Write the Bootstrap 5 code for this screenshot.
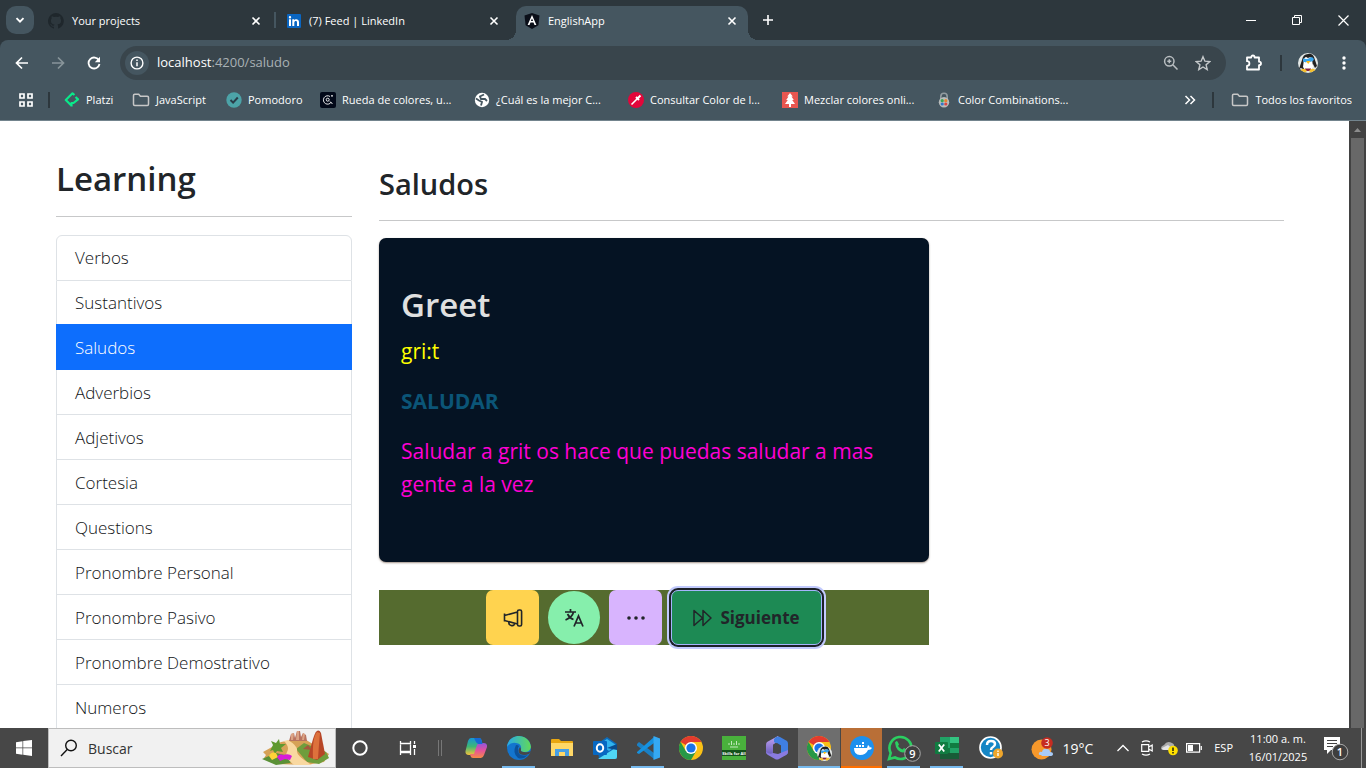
<!DOCTYPE html>
<html lang="es">
<head>
<meta charset="utf-8">
<meta name="viewport" content="width=device-width, initial-scale=1">
<title>EnglishApp</title>
<link href="https://cdn.jsdelivr.net/npm/bootstrap@5.3.0/dist/css/bootstrap.min.css" rel="stylesheet">
<style>
body{font-family:"Open Sans","Noto Sans",sans-serif;font-size:17px;overflow:hidden}
svg{display:block;flex:none}
button{font-family:inherit}
.plain{background:none;border:0;padding:0;color:inherit;display:flex;align-items:center;justify-content:center;flex:none}
/* browser frame */
.tabstrip{height:40px;background:#2d373d;color:#fff;font-size:11px;padding-left:6px}
.tabmenu{width:28px;height:28px;border-radius:10px;background:#455660}
.tab{height:34px;padding-bottom:6px;padding-top:2px}
.tab .plain{width:16px;height:16px}
.tab-one{width:240px;padding-left:14px;padding-right:10px}
.tab-two{width:240px;padding-left:11px;padding-right:14px}
.tab-on{width:232px;padding-left:8px;padding-right:8px;background:#455660;border-radius:10px 10px 0 0;position:relative}
.tab-on::before,.tab-on::after{content:"";position:absolute;bottom:0;width:10px;height:10px}
.tab-on::before{left:-10px;background:radial-gradient(circle at 0 0,transparent 10px,#455660 10px)}
.tab-on::after{right:-10px;background:radial-gradient(circle at 100% 0,transparent 10px,#455660 10px)}
.vline{width:2px;height:16px;background:#455660;flex:none}
.newtab{width:24px}
.winbtn{width:46px;height:40px}
.frame{background:#455660;color:#fff;border-bottom:1px solid #73848d}
.round-top{background:#2d373d}
.toolbar{height:46px;background:#455660;border-radius:8px 8px 0 0;padding:0 12px 0 4px}
.nav-i{width:36px;height:36px}
.omni{height:34px;border-radius:17px;background:#39454c;padding:0 7px 0 5px}
.omni-info{width:24px;height:24px;border-radius:50%;background:#455660}
.omni-btn{width:32px}
.ext{width:54px}
.profile{width:52px}
.dots{width:20px}
.url{font-size:13px;color:#a9b1b5}
.url b{color:#fff;font-weight:400}
.sep-d{width:2px;height:16px;background:#2d373d;flex:none}
.marks .sep-d{margin:0 14px}
.marks .sep-end{margin:0 17px 0 16px}
.marks{height:34px;font-size:11px;padding:0 14px 6px 18px}
.marks a{color:#fff;text-decoration:none;display:flex;align-items:center;gap:6px;white-space:nowrap;overflow:hidden;flex:none}
.bm-s{width:68px}
.bm-m{width:94px}
.bm-l{width:154px}
/* page */
.viewport{min-height:0;overflow:hidden;background:#fff}
.shell{display:grid;grid-template-columns:296px minmax(0,1fr);column-gap:27px;padding:36px 65px 0 56px;overflow:hidden}
.shell h1{font-size:33px;line-height:44px;margin:0 0 15px;font-weight:600}
.shell h2{font-size:29px;line-height:40px;margin:0 0 16px;padding-top:7px;font-weight:600}
.shell hr{margin:0 0 18px}
.shell main hr{margin-bottom:17px}
.menu .list-group-item{padding:9px 18px 8px;height:45px;line-height:26px;font-weight:300;white-space:nowrap;color:#111417}
.menu .list-group-item:first-child{height:46px}
.menu .list-group-item:last-child{border-radius:0}
.menu .list-group-item + .list-group-item.active{color:#fff;background:#0d6efd;margin-top:-2px;height:46px}
.menu .active,.menu .active ~ .list-group-item{padding-top:10px}
.panel{max-width:550px}
.word{background:#051323;border:0;border-radius:7px;height:324px;padding:42px 22px 0;box-shadow:0 1px 2px rgba(70,40,20,.5);font-size:21px;line-height:33px}
.word h3{font-size:33px;line-height:50px;font-weight:600;color:#e0e0e0;margin:0 0 5px}
.word p{margin:0 0 17px}
.ipa{color:#ff0}
.trad{color:#0b5577;font-weight:700}
.desc{color:#ff00d4}
.actions{background:#556b2f;height:55px;margin-top:28px;gap:9px;justify-content:center}
.act{width:53px;height:55px;border-radius:7px;color:#212529}
.act-y{background:#ffd34f}
.act-g{background:#86efac;border-radius:50%;width:52px;height:53px}
.act-p{background:#d8b4fe}
.next{height:55px;width:151px;border:1px solid #a5b4fc;border-radius:7px;background:#1d8a54;color:#212529;font-weight:700;font-size:17px;gap:8px;display:flex;align-items:center;justify-content:center;padding:0;box-shadow:0 0 0 2px #1c2127,0 0 0 4px #c2cafd}
.sbar{width:17px;background:#424242;flex:none}
.sbar .thumb{margin:0 2px;background:#686868}
/* taskbar */
.taskbar{height:40px;background:#474747;color:#fff;font-size:11px}
.t-start{width:48px}
.t-search{width:288px;background:#f1f1f1;border:1px solid #bdbdbd;padding:0 5px 0 11px;gap:10px}
.t-search input{background:none;border:0;outline:0;padding:0;width:100px;flex:1 1 100px;color:#333;font-size:14px}
.t-search input::placeholder{color:#333;opacity:1}
.t-app{width:43px;height:40px;position:relative}
.t-wide{width:48px}
.t-grip{width:22px;padding-left:6px}
.t-run::after{content:"";position:absolute;left:5px;right:5px;bottom:0;height:2px;background:#76b9ed}
.t-on{background:#6e6e6e;width:42px}
.t-on::after{left:0;right:0}
.t-hot{background:#b96f37;width:42px;border-left:1px solid #474747}
.t-hot::after{left:0;right:0;background:#ff6f00}
.weather{font-size:14px;gap:8px;margin-right:12px}
.tray{gap:12px;padding-right:1px}
.tray-ico{gap:8px}
.clock{line-height:18px;width:66px}
.peek{width:4px;height:40px;border-left:1px solid #999}
</style>
</head>
<body class="vh-100 d-flex flex-column">
<svg width="0" height="0" class="position-absolute" aria-hidden="true">
<defs>
<symbol id="x" viewBox="0 0 16 16"><path d="M4.500 4.500l7 7m0-7l-7 7" stroke="#fff" stroke-width="1.600"/></symbol>
<symbol id="folder" viewBox="0 0 18 16"><path d="M1.500 3.500q0-1.200 1.200-1.200h4l1.700 2h6.900q1.200 0 1.200 1.200v6.700q0 1.200-1.200 1.200H2.700q-1.200 0-1.200-1.200z" fill="none" stroke="#c7c7c7" stroke-width="1.500"/></symbol>
<symbol id="chrome" viewBox="0 0 24 24"><circle cx="12" cy="12" r="12" fill="#fbc116"/><path d="M12 12L1.600 6A12 12 0 0 1 22.400 6H12z" fill="#e33b2e"/><path d="M1.600 6A12 12 0 0 0 12 24l5.200-9L12 12 6.800 15z" fill="#279847"/><circle cx="12" cy="12" r="6" fill="#fff"/><circle cx="12" cy="12" r="4.600" fill="#1a73e8"/></symbol>
<symbol id="penguin" viewBox="0 0 20 20"><circle cx="10" cy="10" r="10" fill="#e4e8e6"/><path d="M4 7q1-6 6-6 4-1 6 3l3 9-2 2-2-4-8 6-4-2-2 1z" fill="#222"/><path d="M6 6q1-3 4-1 3-2 4 1l1 8-2 3H7l-2-3z" fill="#fff"/><path d="M5 5.500l4 .5 5-2 2 2-1 2-3 1-2-1-2 1.500-3-1z" fill="#3aa5ec"/><circle cx="8" cy="5" r=".8" fill="#fff"/><path d="M8 8h4.500l-2.300 3z" fill="#f8bb19"/><path d="M7 15.500h6V18H7z" fill="#8b2342"/><path d="M2.500 17q4-3 6.500 1l-2 1.600zM17.500 17q-4-3-6.500 1l2 1.600z" fill="#f6c12e"/></symbol>
</defs></svg>

<header>
<div class="tabstrip d-flex align-items-center">
 <button class="plain tabmenu" aria-label="Buscar pestañas"><svg width="14" height="14" viewBox="0 0 14 14"><path d="M3.500 5.200L7 8.700l3.500-3.500" fill="none" stroke="#fff" stroke-width="1.900"/></svg></button>
 <div class="tab tab-one d-flex align-items-center mt-auto gap-2">
  <svg width="16" height="16" viewBox="0 0 16 16"><path fill="#1f272c" d="M8 0a8 8 0 0 0-2.500 15.600c.4.100.5-.2.500-.4v-1.500c-2.200.5-2.700-.9-2.700-.9-.4-1-.9-1.200-.9-1.200-.7-.5.100-.5.100-.5.800.100 1.200.8 1.200.8.700 1.300 1.900.9 2.300.7.100-.5.300-.9.500-1.100-1.800-.2-3.600-.9-3.600-4 0-.9.300-1.600.8-2.100-.1-.2-.4-1 .1-2.100 0 0 .7-.2 2.200.8a7.600 7.600 0 0 1 4 0c1.500-1 2.200-.8 2.200-.8.400 1.100.1 1.900.1 2.100.5.600.8 1.300.8 2.100 0 3.100-1.900 3.700-3.700 3.900.3.300.6.800.6 1.500v2.200c0 .2.100.5.600.4A8 8 0 0 0 8 0z"/></svg>
  <span class="flex-grow-1">Your projects</span><button class="plain" aria-label="Cerrar"><svg width="16" height="16"><use href="#x"/></svg></button>
 </div>
 <span class="vline"></span>
 <div class="tab tab-two d-flex align-items-center mt-auto gap-2">
  <svg width="14" height="14" viewBox="0 0 14 14"><rect width="14" height="14" rx="1" fill="#0a66c2"/><path fill="#fff" d="M2 5.300h2V12H2zM3 2a1.200 1.200 0 1 1 0 2.400A1.200 1.200 0 0 1 3 2zm2.300 3.300h1.900v.9c.8-1.500 4.800-1.700 4.800 1.900V12h-2V8.500c0-2.200-2.700-1.900-2.700 0V12h-2z"/></svg>
  <span class="flex-grow-1">(7) Feed | LinkedIn</span><button class="plain" aria-label="Cerrar"><svg width="16" height="16"><use href="#x"/></svg></button>
 </div>
 <div class="tab tab-on d-flex align-items-center mt-auto gap-2">
  <svg width="16" height="16" viewBox="0 0 16 16"><path d="M8 0l7.500 2.600-1.100 9.700L8 16l-6.400-3.700L.5 2.600z" fill="#0b0f19"/><path d="M8 2L3.600 12h1.900l1-2.400h3l1 2.400h1.900zm0 3.500L9.100 8H6.900z" fill="#fff"/></svg>
  <span class="flex-grow-1">EnglishApp</span><button class="plain" aria-label="Cerrar"><svg width="16" height="16"><use href="#x"/></svg></button>
 </div>
 <button class="plain newtab ms-2" aria-label="Nueva pestaña"><svg width="12" height="12" viewBox="0 0 12 12"><path d="M6 1v10M1 6h10" stroke="#fff" stroke-width="1.600"/></svg></button>
 <div class="ms-auto d-flex">
  <button class="plain winbtn" aria-label="Minimizar"><svg width="10" height="10" viewBox="0 0 10 10"><path d="M0 5.500h10" stroke="#fff"/></svg></button>
  <button class="plain winbtn" aria-label="Restaurar"><svg width="10" height="10" viewBox="0 0 10 10"><path d="M.5 2.500h7v7h-7zM2.500 2.500v-2h7v7h-2" fill="none" stroke="#fff"/></svg></button>
  <button class="plain winbtn" aria-label="Cerrar ventana"><svg width="11" height="11" viewBox="0 0 11 11"><path d="M.5.500l10 10m0-10l-10 10" stroke="#fff" stroke-width="1.200"/></svg></button>
 </div>
</div>
<div class="frame">
 <div class="round-top"><div class="toolbar d-flex align-items-center">
  <button class="plain nav-i" aria-label="Atrás"><svg width="14" height="14" viewBox="0 0 14 14"><path d="M7 1.500L1.500 7 7 12.500M1.500 7H13" fill="none" stroke="#fff" stroke-width="1.700"/></svg></button>
  <button class="plain nav-i" aria-label="Adelante"><svg width="14" height="14" viewBox="0 0 14 14"><path d="M7 1.500L12.500 7 7 12.500M12.500 7H1" fill="none" stroke="#88949a" stroke-width="1.700"/></svg></button>
  <button class="plain nav-i" aria-label="Recargar"><svg width="14" height="14" viewBox="0 0 14 14"><path d="M12 4.500A5.500 5.500 0 1 0 12.500 8" fill="none" stroke="#fff" stroke-width="1.800"/><path d="M13 .8v5.400H7.800z" fill="#fff"/></svg></button>
  <div class="omni flex-grow-1 d-flex align-items-center ms-2">
   <button class="plain omni-info" aria-label="Información del sitio"><svg width="14" height="14" viewBox="0 0 14 14"><circle cx="7" cy="7" r="5.900" fill="none" stroke="#fff" stroke-width="1.400"/><path d="M7 6.200v4M7 3.500v1.500" stroke="#fff" stroke-width="1.500"/></svg></button>
   <span class="url flex-grow-1 ms-2"><b>localhost</b>:4200/saludo</span>
   <button class="plain omni-btn" aria-label="Zoom"><svg width="16" height="16" viewBox="0 0 16 16"><circle cx="6.300" cy="6.300" r="4.700" fill="none" stroke="#b9bec1" stroke-width="1.500"/><path d="M9.800 9.800l4.700 4.700M6.300 4.300v4M4.300 6.300h4" stroke="#b9bec1" stroke-width="1.500"/></svg></button>
   <button class="plain omni-btn" aria-label="Favorito"><svg width="16" height="16" viewBox="0 0 16 16"><path d="M8 1.700l1.900 4.500 4.900.4-3.700 3.200 1.100 4.800L8 12l-4.200 2.600 1.100-4.800L1.200 6.600l4.900-.4z" fill="none" stroke="#c5c9cb" stroke-width="1.400"/></svg></button>
  </div>
  <button class="plain ext" aria-label="Extensiones"><svg width="18" height="18" viewBox="0 0 18 18"><path d="M3 3.500h4.200q0-2 1.700-2t1.700 2H15v4.200q2 0 2 1.700t-2 1.700v4.400H3v-3.700q2.400 0 2.400-2.300T3 7.200z" fill="none" stroke="#fff" stroke-width="1.800" stroke-linejoin="round"/></svg></button>
  <span class="sep-d"></span>
  <button class="plain profile" aria-label="Perfil"><svg width="20" height="20"><use href="#penguin"/></svg></button>
  <button class="plain dots" aria-label="Menú"><svg width="4" height="16" viewBox="0 0 4 16"><g fill="#fff"><circle cx="2" cy="3" r="1.700"/><circle cx="2" cy="8" r="1.700"/><circle cx="2" cy="13" r="1.700"/></g></svg></button>
 </div></div>
 <nav class="marks d-flex align-items-center">
  <button class="plain" aria-label="Aplicaciones"><svg width="16" height="16" viewBox="0 0 16 16"><g fill="none" stroke="#fff" stroke-width="1.700"><path d="M2 2h4v4H2zM10 2h4v4h-4zM2 10h4v4H2zM10 10h4v4h-4z"/></g></svg></button>
  <span class="sep-d"></span>
  <a href="#" class="bm-s"><svg width="16" height="16" viewBox="0 0 16 16"><path d="M10.500 3L8.500 1.300 1.800 8l5 5M7.500 14.500v-3.500h2L14 7.300 11.500 5" fill="none" stroke="#0ae98a" stroke-width="2.200" stroke-linejoin="round"/></svg>Platzi</a>
  <a href="#" class="bm-m"><svg width="18" height="16"><use href="#folder"/></svg>JavaScript</a>
  <a href="#" class="bm-m"><svg width="16" height="16" viewBox="0 0 16 16"><circle cx="8" cy="8" r="7.700" fill="#4ca3a8"/><path d="M4.500 8l2.600 2.600L11.800 5.500" fill="none" stroke="#2a3c48" stroke-width="2"/></svg>Pomodoro</a>
  <a href="#" class="bm-l"><svg width="16" height="16" viewBox="0 0 16 16"><rect width="16" height="16" rx="2" fill="#020919"/><path d="M10 4.500A4.200 4.200 0 1 0 11.300 10M10 9.500l2.500 2.500" fill="none" stroke="#fff" stroke-width=".9"/><circle cx="7.700" cy="7.700" r="1.500" fill="none" stroke="#fff" stroke-width=".9"/><circle cx="12" cy="3.800" r=".9" fill="#fff"/></svg>Rueda de colores, u...</a>
  <a href="#" class="bm-l"><svg width="16" height="16" viewBox="0 0 16 16"><circle cx="8" cy="8" r="7.200" fill="#fff"/><path d="M10 2.500L6 4.500 7 7h4l2 2M2 6.500l3 2 3 1.500-1 3.500" fill="none" stroke="#455660" stroke-width="1.800"/></svg>¿Cuál es la mejor C...</a>
  <a href="#" class="bm-l"><svg width="16" height="16" viewBox="0 0 16 16"><circle cx="8" cy="8" r="8" fill="#e3063a"/><path d="M3.500 12.500l6-6" stroke="#fff" stroke-width="1.600"/><path d="M8 5l3 3M9 7l3.500-3.500" stroke="#fff" stroke-width="2"/></svg>Consultar Color de l...</a>
  <a href="#" class="bm-l"><svg width="16" height="16" viewBox="0 0 16 16"><path fill="#e85650" d="M0 0h16v16H0z"/><path d="M8 1L5.200 4.500h1.300L4.200 8h1.600L3 12h4v3h2v-3h4l-2.800-4h1.600L9.500 4.500h1.300z" fill="#fff"/></svg>Mezclar colores onli...</a>
  <a href="#" class="bm-l"><svg width="16" height="16" viewBox="0 0 16 16"><path d="M4.800 8V4.500a3.200 3.200 0 0 1 6.400 0V8" fill="none" stroke="#929ba0" stroke-width="1.600"/><circle cx="8" cy="10.300" r="5.200" fill="#b9bcbb"/><circle cx="6.200" cy="8.700" r="1.600" fill="#39a654"/><circle cx="9.800" cy="8.700" r="1.600" fill="#e7832f"/><circle cx="6.200" cy="12" r="1.600" fill="#3377c9"/><circle cx="9.800" cy="12" r="1.600" fill="#d84545"/></svg>Color Combinations...</a>
  <button class="plain ms-auto" aria-label="Más favoritos"><svg width="12" height="12" viewBox="0 0 12 12"><path d="M1.500 2l4 4-4 4M6.500 2l4 4-4 4" fill="none" stroke="#fff" stroke-width="1.500"/></svg></button>
  <span class="sep-d sep-end"></span>
  <a href="#"><svg width="18" height="16"><use href="#folder"/></svg>Todos los favoritos</a>
 </nav>
</div>
</header>

<div class="viewport flex-grow-1 d-flex">
 <div class="shell flex-grow-1">
  <aside>
   <h1>Learning</h1><hr>
   <nav class="list-group menu">
    <a href="#" class="list-group-item">Verbos</a>
    <a href="#" class="list-group-item">Sustantivos</a>
    <a href="#" class="list-group-item active" aria-current="page">Saludos</a>
    <a href="#" class="list-group-item">Adverbios</a>
    <a href="#" class="list-group-item">Adjetivos</a>
    <a href="#" class="list-group-item">Cortesia</a>
    <a href="#" class="list-group-item">Questions</a>
    <a href="#" class="list-group-item">Pronombre Personal</a>
    <a href="#" class="list-group-item">Pronombre Pasivo</a>
    <a href="#" class="list-group-item">Pronombre Demostrativo</a>
    <a href="#" class="list-group-item">Numeros</a>
   </nav>
  </aside>
  <main>
   <h2>Saludos</h2><hr>
   <div class="panel">
    <article class="card word">
     <h3>Greet</h3>
     <p class="ipa">gri:t</p>
     <p class="trad">SALUDAR</p>
     <p class="desc">Saludar a grit os hace que puedas saludar a mas gente a la vez</p>
    </article>
    <div class="actions d-flex align-items-center">
     <button class="plain act act-y" aria-label="Pronunciar"><svg width="20" height="20" viewBox="0 0 20 20"><g fill="none" stroke="#212529" stroke-width="1.600" stroke-linejoin="round"><path d="M1.500 5.500v8M1.500 7.500L14.500 4v12l-13-3.500M14.500 3.500q0-1.500 1.600-1.500h1q1.500 0 1.500 1.500v13q0 1.500-1.500 1.500h-1q-1.600 0-1.600-1.500z"/><path d="M6 13.800a3 3 0 0 0 5.800 1.600"/></g></svg></button>
     <button class="plain act act-g" aria-label="Traducir"><svg width="20" height="20" viewBox="0 0 20 20"><g fill="none" stroke="#212529" stroke-width="1.700"><path d="M1 4h11M6.500 1v3M9.500 4q-1 5-8 8M3.500 6q2 4 6 5.500"/><path d="M10 18.500L14.500 8l4.500 10.500M11.500 15h6"/></g></svg></button>
     <button class="plain act act-p" aria-label="Más"><svg width="20" height="20" viewBox="0 0 20 20"><g fill="#212529"><circle cx="3" cy="10" r="1.800"/><circle cx="10" cy="10" r="1.800"/><circle cx="17" cy="10" r="1.800"/></g></svg></button>
     <button class="next"><svg width="19" height="18" viewBox="0 0 19 18"><path d="M1 1.500v15L9.500 9zM10 1.500v15L18 9z" fill="none" stroke="#212529" stroke-width="1.500" stroke-linejoin="round"/></svg>Siguiente</button>
    </div>
   </div>
  </main>
 </div>
 <div class="sbar d-flex flex-column">
  <svg width="17" height="17" viewBox="0 0 17 17"><path d="M5 11l3.500-4 3.500 4z" fill="#8c8c8c"/></svg>
  <div class="thumb flex-grow-1"></div>
 </div>
</div>

<footer class="taskbar d-flex align-items-stretch">
 <button class="plain t-start" aria-label="Inicio"><svg width="16" height="16" viewBox="0 0 16 16"><path fill="#fff" d="M0 2.200L6.500 1.200v6.400H0zM7.200 1.100L16 0v7.600H7.200zM0 8.300h6.500v6.400L0 13.800zM7.200 8.300H16V16l-8.800-1.200z"/></svg></button>
 <label class="t-search d-flex align-items-center">
  <svg width="18" height="18" viewBox="0 0 18 18"><circle cx="11" cy="6.500" r="5.300" fill="none" stroke="#111" stroke-width="1.400"/><path d="M7.200 10.500L1 17" stroke="#111" stroke-width="1.400"/></svg>
  <input type="text" placeholder="Buscar" aria-label="Buscar">
  <svg width="68" height="36" viewBox="0 0 68 36"><path d="M1 22l18-10 22-4 26 16-5 8-18 3-30-1-12-6 2-3z" fill="#d6a257"/><path d="M34 19l8-6 22 9 3 6-10 6-12-2z" fill="#6f9d3c"/><path d="M0 29l14-6 18 4-4 6-14 2z" fill="#5b9137"/><path d="M22 11q6 6 3 11t7 13l18 0q-16-9-15-14T26 10z" fill="#f9d8a0"/><path d="M27 11l2-7 3-1 1 5 2-7 3 0 1 6 2-4 3 2 1 6z" fill="#b87360"/><path d="M29 4l3-1-1 7h-2zM35 1h2l0 9h-3zM41 3l2 1-1 6h-2z" fill="#dca384"/><path d="M41 19l5-4 4 5z" fill="#a5583d"/><path d="M46 27l5-18q4-13 8-6l4 21-8 6z" fill="#b74627"/><path d="M55 2q-5 6-4 27l5 0q1-16 2-26z" fill="#dd713c"/><path d="M8 21l3-6-2-4 5 2 3-4 1 5 6 0-5 4 2 4-6-1-2 3-2-4z" fill="#5e992f"/><path d="M7 26q2-5 7-3l2 4-6 3z" fill="#ffd337"/><path d="M15 27q3-4 6-2 6-2 9 1l-2 4-5-1-5 2z" fill="#d81bd9"/></svg>
 </label>
 <button class="plain t-app t-wide" aria-label="Cortana"><svg width="16" height="16" viewBox="0 0 16 16"><circle cx="8" cy="8" r="6.700" fill="none" stroke="#fff" stroke-width="2"/></svg></button>
 <button class="plain t-app t-wide" aria-label="Vista de tareas"><svg width="18" height="18" viewBox="0 0 18 18"><path d="M1.500 2v2.500h10V2M1.500 16v-2.500h10V16M1.500 5.500v7h10v-7M15.500 2v3M15.500 10v6" fill="none" stroke="#fff" stroke-width="1.300"/><path fill="#fff" d="M14 6h3v3h-3z"/></svg></button>
 <span class="t-grip d-flex align-items-center"><svg width="4" height="16" viewBox="0 0 4 16"><path d="M.5 0v16M3.500 0v16" stroke="#777"/></svg></span>
 <button class="plain t-app" aria-label="Copilot"><svg width="24" height="24" viewBox="0 0 24 24"><defs><linearGradient id="ca" x2="0" y2="1"><stop stop-color="#1696d6"/><stop offset=".5" stop-color="#3db874"/><stop offset="1" stop-color="#f4c23c"/></linearGradient><linearGradient id="cb" x2="0" y2="1"><stop stop-color="#8f55dd"/><stop offset=".5" stop-color="#e5529b"/><stop offset="1" stop-color="#f78a45"/></linearGradient></defs><path d="M7 2h8q2 0 2.500 2l1 4h-4l-3 9q-1 2-3 2H5q-4 0-3.500-4L4 5q1-3 3-3z" fill="url(#ca)"/><path d="M17 22H9q-2 0-2.500-2l-.5-2 4 0 3-9q1-2 3-2h3.500q4 0 3.500 4L20 19q-1 3-3 3z" fill="url(#cb)"/><path d="M10 2h5q2 0 2.500 2l1 4h-4q-2 0-3-3z" fill="#1569d5"/></svg></button>
 <button class="plain t-app t-run" aria-label="Edge"><svg width="24" height="24" viewBox="0 0 24 24"><defs><linearGradient id="ed"><stop stop-color="#27a9ea"/><stop offset="1" stop-color="#62d957"/></linearGradient></defs><circle cx="12" cy="12" r="12" fill="#1375ce"/><path d="M0 11C1-3 22-4 24 11q-1 5-6 5-5 0-4-3 1-5-5-6Q3 6 0 11z" fill="url(#ed)"/><path d="M9 9q-4 8 2 13 5 2 10-3-9 2-10-4-1-3 1-5-1-1-3-1z" fill="#0c529b"/><path d="M13 11q-3 4 0 7 4 2 9 0l2-3q-3 2-7 1-4 0-3-3z" fill="#474747"/></svg></button>
 <button class="plain t-app" aria-label="Explorador"><svg width="22" height="20" viewBox="0 0 22 20"><path d="M0 2q0-1 1-1h7l2 2h11q1 0 1 1v14H0z" fill="#e9a711"/><path d="M0 5h22v13H0z" fill="#ffd867"/><path d="M4 18v-7h14v7h-4v-4H8v4z" fill="#48a0e5"/></svg></button>
 <button class="plain t-app" aria-label="Outlook"><svg width="24" height="22" viewBox="0 0 24 22"><path d="M4 7l10-7 10 7v13q0 2-2 2H6z" fill="#0d6bba"/><path d="M7 7l7-5 9 6-7 6z" fill="#2fb3ee"/><path d="M5 22l19-12v10q0 2-2 2z" fill="#50d7f5"/><path d="M14 11l10-4v6z" fill="#0a4b8c"/><rect y="4" width="14" height="14" rx="1" fill="#0768c2"/><ellipse cx="7" cy="11" rx="3.200" ry="3.700" fill="none" stroke="#fff" stroke-width="2"/></svg></button>
 <button class="plain t-app t-run" aria-label="Visual Studio Code"><svg width="24" height="24" viewBox="0 0 24 24"><path d="M1 8l2-2 15 11v6L1 9.500z" fill="#1b80c4"/><path d="M1 16L18 1v6L3 18l-2-1z" fill="#1591df"/><path d="M17.500 0L24 2.500v19L17.500 24z" fill="#35a9f2"/></svg></button>
 <button class="plain t-app" aria-label="Chrome"><svg width="24" height="24"><use href="#chrome"/></svg></button>
 <button class="plain t-app" aria-label="Cisco Skills for All"><svg width="24" height="24" viewBox="0 0 24 24"><path fill="#49b13c" d="M0 0h24v24H0z"/><path fill="#15521c" d="M0 14h24v6H0z"/><path d="M7 7v2M9.500 5v4M12 7v2M14.500 5v4M17 7v2M8 11h8" stroke="#c1e8bd"/><text x="12" y="18.500" font-size="4" font-weight="700" fill="#fff" text-anchor="middle">Skills for All</text></svg></button>
 <button class="plain t-app" aria-label="Microsoft 365"><svg width="24" height="24" viewBox="0 0 24 24"><defs><linearGradient id="m" x2="0" y2="1"><stop stop-color="#c5a6f4"/><stop offset="1" stop-color="#6358b9"/></linearGradient></defs><path d="M13 0L2 6q-1 1-1 3v8l7 3V10q0-2 1-2l6-4z" fill="url(#m)"/><path d="M11 1q2-1 4 0l7 4q1 1 1 3v8q0 2-2 3l-5 2V10L9 6V3z" fill="#3f7fe2"/><path d="M23 14v2q0 2-2 3l-7 4q-2 1-4 0l-7-4q-2-1-2-3 4 3 7 1l5 1z" fill="#8a7be0"/><path d="M8 9l4-2 4 2.500V14l-4 3-4-2z" fill="#474747"/></svg></button>
 <button class="plain t-app t-run t-on" aria-label="EnglishApp - Chrome"><svg width="28" height="28" viewBox="0 0 28 28"><svg x="2" y="2" width="24" height="24"><use href="#chrome"/></svg><svg x="12" y="12" width="15" height="15"><use href="#penguin"/></svg></svg></button>
 <button class="plain t-app t-run t-hot" aria-label="Docker"><svg width="24" height="24" viewBox="0 0 24 24"><circle cx="12" cy="12" r="12" fill="#1d90ed"/><path d="M4 12h13l1-3q2 1 1.500 2.500 1.500-.5 2.500.5-1 2-4 2-2 5-8 5-6 0-6-7zM6 9h2v2H6zM9 9h2v2H9zM12 9h2v2h-2zM12 6h2v2h-2z" fill="#fff"/></svg></button>
 <button class="plain t-app t-run" aria-label="WhatsApp"><svg width="34" height="28" viewBox="0 0 34 28"><path d="M2 25l1.700-6A11 11 0 1 1 8 23.500z" fill="none" stroke="#2bcf61" stroke-width="2.600"/><path d="M8 8.500q2-3 3 0l1 2-1 1.500q2 3 4.500 3.500l1.500-1.500 3 1.500q-1 3-4 3-7-1-8-10z" fill="#2bcf61"/><circle cx="25.500" cy="19.500" r="7.800" fill="#3e3e3e" stroke="#aaa"/><text x="25.500" y="23.500" text-anchor="middle" font-size="11" font-weight="600" fill="#fff">9</text></svg></button>
 <button class="plain t-app t-run" aria-label="Excel"><svg width="24" height="22" viewBox="0 0 24 22"><path fill="#21a366" d="M5 0h19v22H5z"/><path fill="#33c481" d="M15 0h9v6h-9z"/><path fill="#107c41" d="M5 11h10v5H5zM15 6h9v5h-9z"/><path fill="#185c37" d="M5 16h19v6H5z"/><rect y="5" width="13" height="12" rx="1" fill="#107c41"/><path d="M3.800 7.500l5.400 7M9.200 7.500l-5.400 7" stroke="#fff" stroke-width="1.800"/></svg></button>
 <button class="plain t-app t-wide" aria-label="Ayuda"><svg width="26" height="24" viewBox="0 0 26 24"><circle cx="11.500" cy="11.500" r="10.500" fill="#1586c5" stroke="#fff" stroke-width="1.700"/><path d="M8 9q0-4 4-4t4 3q0 2-2 3-2 1-2 3M12 16v2.500" fill="none" stroke="#fff" stroke-width="2.500"/><circle cx="19" cy="17.500" r="5" fill="#efa62b"/><path d="M19 17v3M19 14.500V16" stroke="#fff" stroke-width="1.400"/></svg></button>
 <div class="ms-auto d-flex align-items-center tray">
  <button class="plain weather" aria-label="El tiempo"><svg width="23" height="23" viewBox="0 0 23 23"><circle cx="10.500" cy="12.500" r="10" fill="#f6982b"/><path d="M10 18q-3 0-2-2 1-2 3-1 1-4 5-3 3 0 3 3 3 0 3 2t-3 2H11z" fill="#a8cbf7"/><circle cx="16" cy="6" r="5.800" fill="#c62c21"/><text x="16" y="9.200" text-anchor="middle" font-size="9" fill="#fff">3</text></svg>19°C</button>
  <button class="plain" aria-label="Mostrar iconos ocultos"><svg width="12" height="8" viewBox="0 0 12 8"><path d="M.5 7L6 1.500 11.500 7" fill="none" stroke="#fff" stroke-width="1.300"/></svg></button>
  <div class="tray-ico d-flex align-items-center">
   <svg width="12" height="16" viewBox="0 0 12 16"><path d="M.7 4.700h7v6.600h-7zM7.700 7l3.500-2v6l-3.500-2M1 2q4-2.400 8 0M1 14q4 2.400 8 0" fill="none" stroke="#fff" stroke-width="1.200"/></svg>
   <svg width="17" height="16" viewBox="0 0 17 16"><path d="M3 10q-3 0-3-2t3-3q3-5 8-2 3 1 2 5l-5 2z" fill="#aaa"/><path d="M1 8l6-3 6 5H3q-2 0-2-2z" fill="#e5e5e5"/><circle cx="12" cy="10.500" r="4.800" fill="#ffe100"/><path d="M12 7.500v3.500M12 12v1.500" stroke="#111" stroke-width="1.400"/></svg>
   <svg width="16" height="10" viewBox="0 0 16 10"><path d="M.6.600h13v8.500H.6zM15.300 3v4" fill="none" stroke="#fff" stroke-width="1.200"/><path fill="#fff" d="M2 2h5v6H2z"/></svg>
  </div>
  <span>ESP</span>
  <div class="clock text-center text-nowrap">11:00 a. m.<br>16/01/2025</div>
  <button class="plain" aria-label="Notificaciones"><svg width="26" height="26" viewBox="0 0 26 26"><path d="M1 2h16v13H8l-4 4v-4H1z" fill="#fff"/><path d="M4 5.500h10M4 8.500h10M4 11.500h6" stroke="#444" stroke-width="1.200"/><circle cx="17" cy="17" r="7.800" fill="#3e3e3e" stroke="#aaa"/><text x="17" y="21" text-anchor="middle" font-size="11" font-weight="600" fill="#fff">1</text></svg></button>
  <span class="peek"></span>
 </div>
</footer>
<script src="https://cdn.jsdelivr.net/npm/bootstrap@5.3.0/dist/js/bootstrap.bundle.min.js"></script>
</body>
</html>
